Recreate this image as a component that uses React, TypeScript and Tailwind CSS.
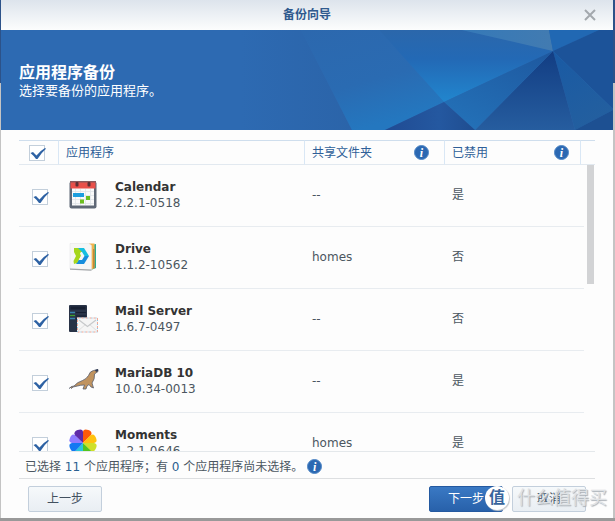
import { useState, type ReactNode } from "react";

type AppRow = {
  name: string;
  version: string;
  share: string;
  disabled: string;
  icon: ReactNode;
};

function CalendarIcon() {
  return (
    <svg width="28" height="28" viewBox="0 0 28 28" aria-hidden="true">
      <rect x="0.5" y="0.5" width="27" height="27" rx="2" fill="#5f6876" />
      <rect x="3" y="1" width="22" height="23.500" fill="#fafafa" />
      <path d="M3 10.500h22M3 14.500h22M3 18.500h22M3 22.500h22M6.500 8v16M11.500 8v16M16.500 8v16M21.500 8v16" stroke="#dfe4e9" strokeWidth="0.8" />
      <rect x="1.500" y="1" width="25" height="6.500" fill="#e9504a" />
      <rect x="1" y="0" width="26" height="1.500" fill="#8b5a5d" />
      <rect x="4" y="12" width="11" height="4" fill="#1c9ede" />
      <rect x="17" y="15" width="4" height="4" fill="#6cbf1f" />
      <rect x="11" y="18.500" width="4" height="4" fill="#6cbf1f" />
      <rect x="6.500" y="1" width="3" height="4.500" rx="1" fill="#5b3036" />
      <rect x="18.500" y="1" width="3" height="4.500" rx="1" fill="#5b3036" />
    </svg>
  );
}

function DriveIcon() {
  return (
    <svg width="28" height="28" viewBox="0 0 28 28" aria-hidden="true">
      <path d="M22 2l5 -1v24l-5 2z" fill="#2daa91" />
      <path d="M20 0.500h5.500v24.500l-4 2z" fill="#f2b44e" />
      <path d="M24 6h1.500v19l-1.500 0.500z" fill="#c4873a" />
      <path d="M1 0.500h19l2.500 2v24.500l-21.500 -1z" fill="#f6f6f6" stroke="#e2e3e4" strokeWidth="0.5" />
      <path d="M1 25.500l21.500 1v1.200l-21.500 -1z" fill="#a3a6a9" />
      <path d="M8 5h7l5 8h-4.500l-2.500 -4h-3z" fill="#16bfe0" />
      <path d="M20 13l-5 8h-8l2.500 -4h3.500l2.500 -4z" fill="#168ddd" />
      <path d="M5 5h4l4 4l-1.500 0l0.500 4l-4 7l-3 1l-0.500 -3l2.500 -5l-2 -4z" fill="#a5d61c" />
      <path d="M11 10h1.500l2 3l-2 3.500h-2.500l2 -3.500z" fill="#f6f6f6" />
    </svg>
  );
}

function MailIcon() {
  return (
    <svg width="30" height="28" viewBox="0 0 30 28" aria-hidden="true">
      <rect x="0" y="0" width="18" height="27" rx="1" fill="#293347" />
      <rect x="1.500" y="1.500" width="15" height="3" fill="#171f32" />
      <path d="M7 7.500h10M7 11h10M7 14h10" stroke="#171f32" />
      <path d="M1 7.500h5M1 13.500h5" stroke="#3983b0" strokeWidth="1.300" />
      <path d="M1 10.500h5" stroke="#409c2c" strokeWidth="1.300" />
      <rect x="8" y="12.500" width="21" height="15" fill="#f5f5f5" />
      <rect x="8.500" y="13" width="20" height="14" fill="none" stroke="#f3a896" strokeDasharray="2 2" />
      <rect x="8.500" y="13" width="20" height="14" fill="none" stroke="#8cc4e6" strokeDasharray="1 3" strokeDashoffset="-2" />
      <path d="M9.500 25.500l7 -6M27.500 25.500l-7 -6" stroke="#dfdfdf" />
      <path d="M10 15l8.500 6.500l8.500 -6.500" fill="none" stroke="#c6c8ca" strokeWidth="1.200" />
    </svg>
  );
}

function SealIcon() {
  return (
    <svg width="30" height="28" viewBox="0 0 30 28" aria-hidden="true">
      <path
        d="M0.500 21.500q1 -2.500 4.500 -2.500q3.500 -4 8.500 -5.500q4 -1.500 6 -5q1.500 -4.500 5 -5l4.500 -1v2l-3.500 2.500q0.500 5 -2.500 9l1.500 5q-3 -0.500 -4.500 -3.500l-2 1.500l-1 3h-3l1.500 -4q-4 0 -7 1l-4.500 1l-1.500 1.500l-1 -1.500z"
        fill="#c0935f"
        stroke="#596070"
        strokeWidth="0.8"
        strokeLinejoin="round"
      />
      <path d="M26 3l3 -1v2l-2 1z" fill="#2f3c59" />
    </svg>
  );
}

const petals = [
  { angle: 22.5, color: "#ff5a0a" },
  { angle: 67.5, color: "#ffc20f" },
  { angle: 112.5, color: "#cfe02a" },
  { angle: 157.5, color: "#53c61d" },
  { angle: 202.5, color: "#2cc6dc" },
  { angle: 247.5, color: "#1478f2" },
  { angle: 292.5, color: "#8f7bff" },
  { angle: 337.5, color: "#5f2aa8" },
];

function MomentsIcon() {
  return (
    <svg width="28" height="28" viewBox="0 0 28 28" aria-hidden="true">
      {petals.map((p) => (
        <path
          key={p.angle}
          d="M14 14l-4.300 -10.200c-0.500 -3 1.500 -3.800 4.300 -3.800s4.800 0.800 4.300 3.800z"
          fill={p.color}
          transform={`rotate(${p.angle} 14 14)`}
        />
      ))}
    </svg>
  );
}

const rows: AppRow[] = [
  { name: "Calendar", version: "2.2.1-0518", share: "--", disabled: "是", icon: <CalendarIcon /> },
  { name: "Drive", version: "1.1.2-10562", share: "homes", disabled: "否", icon: <DriveIcon /> },
  { name: "Mail Server", version: "1.6.7-0497", share: "--", disabled: "否", icon: <MailIcon /> },
  { name: "MariaDB 10", version: "10.0.34-0013", share: "--", disabled: "是", icon: <SealIcon /> },
  { name: "Moments", version: "1.2.1-0646", share: "homes", disabled: "是", icon: <MomentsIcon /> },
];

function Check({ label }: { label: string }) {
  const [on, setOn] = useState(true);
  return (
    <label className="relative block size-4">
      <input
        type="checkbox"
        aria-label={label}
        checked={on}
        onChange={() => setOn(!on)}
        className="block size-4 appearance-none border border-[#c3cfdb] bg-white"
      />
      {on && (
        <svg className="pointer-events-none absolute top-0 left-0" width="18" height="16" viewBox="0 0 18 16" aria-hidden="true">
          <path d="M1.500 8l2.500 -1l3.500 3.500q4 -5 8.500 -7.500l1 0.700q-5 4.300 -8.500 10.300h-1.500q-2.500 -3.500 -5.500 -6z" fill="#2e62a4" />
        </svg>
      )}
    </label>
  );
}

function Info() {
  return (
    <span className="flex size-[15px] items-center justify-center rounded-full border border-[#5288c6] bg-[#2b68b2] font-['Liberation_Serif',serif] text-xs leading-3 font-bold text-white italic">
      i
    </span>
  );
}

function HeroArt() {
  return (
    <svg
      className="absolute inset-0 size-full"
      viewBox="0 0 612 100"
      preserveAspectRatio="xMaxYMin slice"
      aria-hidden="true"
    >
      <defs>
        <linearGradient id="band" x1="0" y1="0" x2="0.4" y2="1">
          <stop offset="0" stopColor="#2c68ae" />
          <stop offset="0.6" stopColor="#2a6bb2" />
          <stop offset="1" stopColor="#2477bf" />
        </linearGradient>
        <linearGradient id="fold" x1="0" y1="0" x2="1" y2="0">
          <stop offset="0" stopColor="#2d6ab2" />
          <stop offset="1" stopColor="#2b64a9" />
        </linearGradient>
        <linearGradient id="glow" x1="0" y1="0" x2="0" y2="1">
          <stop offset="0" stopColor="#2b67ab" />
          <stop offset="0.4" stopColor="#2369b5" />
          <stop offset="1" stopColor="#2186ce" />
        </linearGradient>
        <linearGradient id="pale" x1="0" y1="0" x2="1" y2="0">
          <stop offset="0" stopColor="#3579b8" />
          <stop offset="1" stopColor="#427bb1" />
        </linearGradient>
        <linearGradient id="slant" x1="1" y1="0" x2="0.3" y2="1">
          <stop offset="0" stopColor="#1e589f" />
          <stop offset="1" stopColor="#2370b7" />
        </linearGradient>
        <linearGradient id="deep" x1="0" y1="0" x2="0" y2="1">
          <stop offset="0" stopColor="#123d83" />
          <stop offset="1" stopColor="#265d9f" />
        </linearGradient>
        <linearGradient id="dusk" x1="0" y1="0" x2="1" y2="0">
          <stop offset="0" stopColor="#204b93" />
          <stop offset="0.6" stopColor="#2458a0" />
          <stop offset="1" stopColor="#1f4d90" />
        </linearGradient>
        <linearGradient id="edge" x1="0" y1="0" x2="0.5" y2="1">
          <stop offset="0" stopColor="#195aa4" />
          <stop offset="1" stopColor="#235f9f" />
        </linearGradient>
      </defs>
      <path d="M240 0h60l51 100h-111z" fill="url(#fold)" />
      <path d="M300 0h78l65 72l-59 28h-33z" fill="url(#band)" />
      <path d="M378 0h83l91 21l-109 51z" fill="url(#glow)" />
      <path d="M461 0h87l4 21z" fill="url(#pale)" />
      <path d="M548 0h50l-46 21z" fill="#2168b3" />
      <path d="M598 0h14v79l-60 -58z" fill="#1c5399" />
      <path d="M552 21l60 58v1l-38 20z" fill="url(#edge)" />
      <path d="M574 100l38 -20v20z" fill="#1d5092" />
      <path d="M552 21l22 79h-100z" fill="url(#deep)" />
      <path d="M443 72l109 -51l-78 79z" fill="url(#slant)" />
      <path d="M384 100l59 -28l31 28z" fill="url(#dusk)" />
    </svg>
  );
}

const plainButton =
  "h-[26px] w-[74px] rounded-[2px] border border-[#c3cfdc] bg-linear-to-b from-[#f6f9fb] to-[#e9eef3] text-[#42505f]";

export default function App() {
  return (
    <div className="flex h-screen flex-col bg-[linear-gradient(#2c5289_83px,#c4c4c4_83px,#c4c4c4_calc(100%-3px),#999_calc(100%-3px))] pr-[2px] pb-[3px] pl-px font-['DejaVu_Sans','Noto_Sans_CJK_SC',sans-serif] text-xs text-[#4b5660]">
      <div role="dialog" aria-labelledby="title" className="flex min-h-0 flex-1 flex-col bg-[#fdfdfd]">
        <header className="relative flex h-[30px] shrink-0 items-center justify-center bg-linear-to-b from-[#dde4ec] to-[#fcfdfd]">
          <h1 id="title" className="font-bold text-[#2f5a8e]">备份向导</h1>
          <button type="button" aria-label="关闭" className="absolute top-2 right-4 size-[14px] text-[#a3a8ad]">
            <svg width="14" height="14" viewBox="0 0 14 14" fill="none" stroke="currentColor" strokeWidth="2" aria-hidden="true">
              <path d="M2 2l10 10M12 2l-10 10" />
            </svg>
          </button>
        </header>

        <section className="relative flex h-[100px] shrink-0 flex-col justify-center bg-[#2d6ab2] px-[18px] pt-px text-white">
          <HeroArt />
          <h2 className="relative text-base leading-5 font-bold">应用程序备份</h2>
          <p className="relative text-[13px] leading-4">选择要备份的应用程序。</p>
        </section>

        <main className="flex min-h-0 flex-1 flex-col px-[18px] pt-[10px]">
          <div className="relative min-h-0 flex-1 overflow-hidden">
            <table className="w-full table-fixed border-separate border-spacing-0 text-left">
              <colgroup>
                <col className="w-[39px]" />
                <col />
                <col className="w-[140px]" />
                <col className="w-[136px]" />
                <col className="w-[15px]" />
              </colgroup>
              <thead>
                <tr className="h-[25px] text-[#2f5f98] *:border-y *:border-t-[#cfdeed] *:border-b-[#e2e9f0] *:p-0 *:font-normal">
                  <th className="pl-[10px]!"><Check label="全选" /></th>
                  <th className="border-l border-l-[#d9e7f5] pl-[7px]!">应用程序</th>
                  <th className="border-l border-l-[#d9e7f5] pl-[7px]!">
                    <div className="flex items-center justify-between pr-[15px]">共享文件夹<Info /></div>
                  </th>
                  <th className="border-l border-l-[#d9e7f5] pl-[7px]!">
                    <div className="flex items-center justify-between pr-[11px]">已禁用<Info /></div>
                  </th>
                  <th className="border-l border-l-[#d9e7f5]" />
                </tr>
              </thead>
              <tbody>
                {rows.map((r) => (
                  <tr key={r.name} className="h-[62px] *:border-b *:border-[#e8ecf0] *:px-0 *:pt-0 *:pb-[2px]">
                    <td className="pt-1! pl-[13px]!"><Check label={r.name} /></td>
                    <td>
                      <div className="flex items-center pl-[11px]">
                        <div className="w-[46px]">{r.icon}</div>
                        <div className="leading-4">
                          <div className="font-bold text-[#333]">{r.name}</div>
                          <div>{r.version}</div>
                        </div>
                      </div>
                    </td>
                    <td className="pl-2!">{r.share}</td>
                    <td className="pl-2!">{r.disabled}</td>
                    <td />
                  </tr>
                ))}
              </tbody>
            </table>
            <div className="absolute top-[25px] right-0 bottom-0 w-[11px] bg-[#fdfdfd] pr-px pl-[3px]">
              <div className="h-[119px] bg-[#d2d3d5]" />
            </div>
          </div>

          <div className="flex h-7 shrink-0 items-center gap-1 border-y border-t-[#e4e8eb] border-b-[#dddfe1] pt-[3px] pl-[6px]">
            <p>
              已选择 <span className="text-[#2a5f8f]">11</span> 个应用程序；有 <span className="text-[#2a5f8f]">0</span> 个应用程序尚未选择。
            </p>
            <Info />
          </div>

          <footer className="relative flex shrink-0 gap-[9px] px-[9px] pt-[7px] pb-[6px]">
            <button type="button" className={plainButton}>上一步</button>
            <button
              type="button"
              className="ml-auto h-[26px] w-[74px] rounded-[2px] border border-[#2459a0] bg-linear-to-b from-[#3a79c4] to-[#2861aa] text-white"
            >
              下一步
            </button>
            <button type="button" className={plainButton}>取消</button>
            <div className="pointer-events-none absolute top-[6px] -right-3 flex items-center gap-2 text-lg leading-[26px] text-[#dfe2e5] [text-shadow:1px_1px_1px_#a9aeb4]">
              <span className="flex size-6 items-center justify-center rounded-full bg-white text-base font-bold text-[#38659c] shadow-[1px_1px_1px_#c5c8cb] [text-shadow:none]">
                值
              </span>
              什么值得买
            </div>
          </footer>
        </main>
      </div>
    </div>
  );
}
